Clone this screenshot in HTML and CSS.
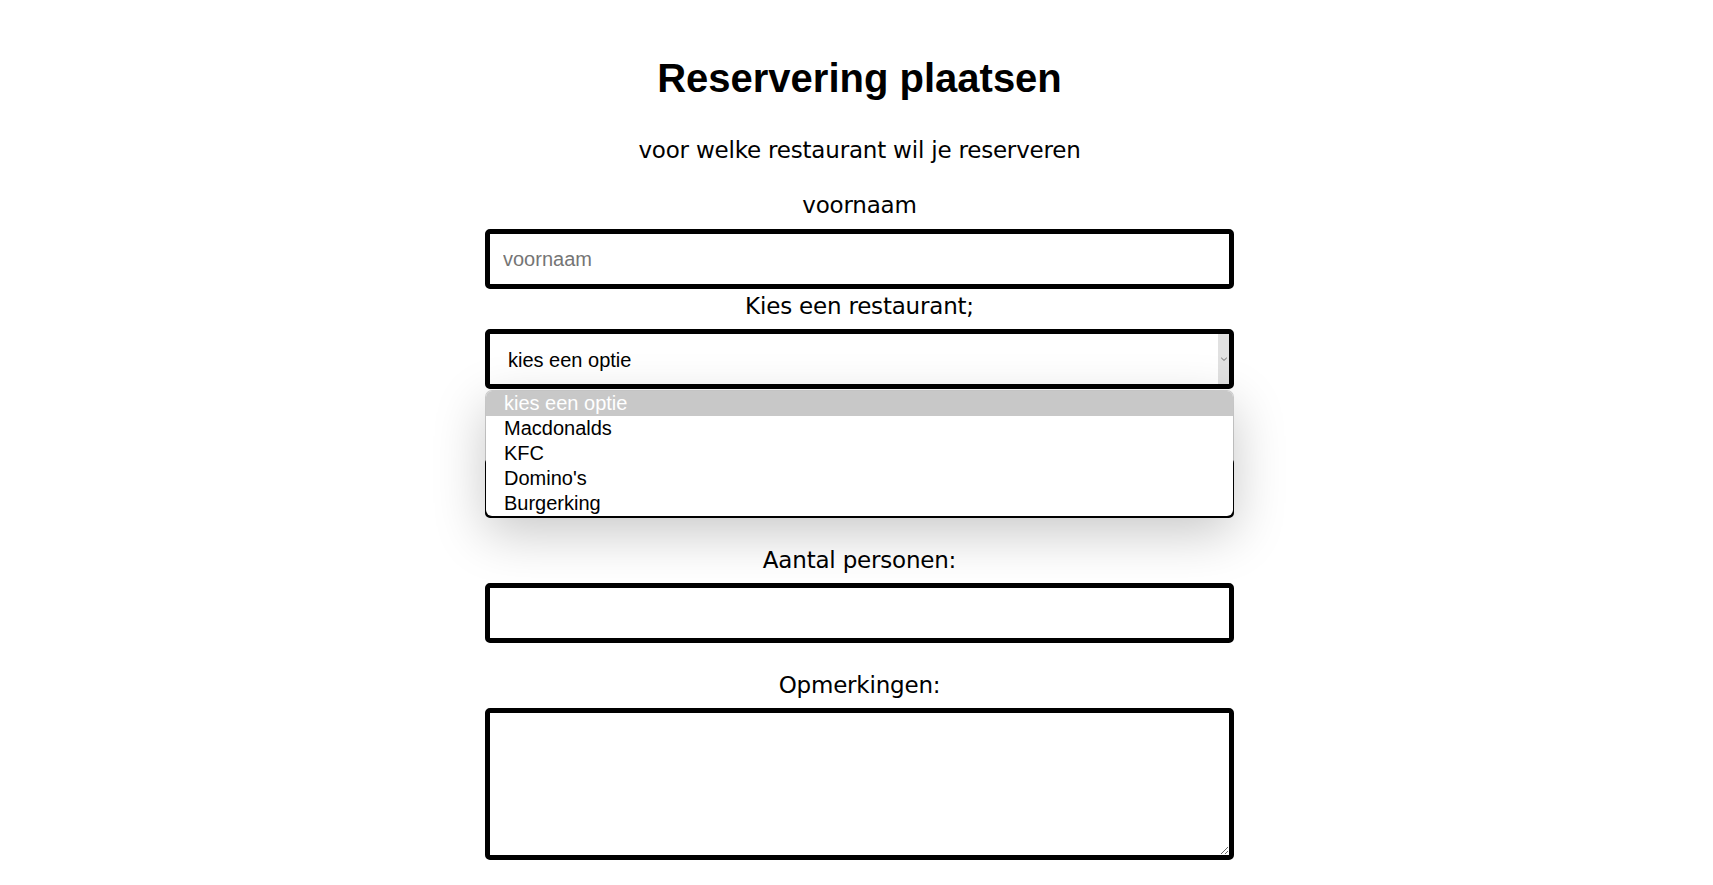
FILE: index.html
```html
<!DOCTYPE html>
<html lang="nl">
<head>
<meta charset="utf-8">
<title>Reservering plaatsen</title>
<link rel="stylesheet" href="styles.css">
</head>
<body>
<main class="page">
  <h1 class="title">Reservering plaatsen</h1>
  <p class="intro">voor welke restaurant wil je reserveren</p>
  <form class="form">
    <label class="label label-first" for="voornaam">voornaam</label>
    <input class="field field-first" id="voornaam" type="text" placeholder="voornaam">

    <label class="label label-tight" for="restaurant">Kies een restaurant;</label>
    <div class="select-wrap">
      <select class="field select" id="restaurant">
        <option>kies een optie</option>
        <option>Macdonalds</option>
        <option>KFC</option>
        <option>Domino's</option>
        <option>Burgerking</option>
      </select>
      <span class="select-btn" aria-hidden="true">
        <svg width="8" height="6" viewBox="0 0 8 6"><path d="M1.2 1.8 L4 4.4 L6.8 1.8" fill="none" stroke="#6b6b6b" stroke-width="1"/></svg>
      </span>
      <ul class="listbox" role="listbox">
        <li class="opt opt-active">kies een optie</li>
        <li class="opt">Macdonalds</li>
        <li class="opt">KFC</li>
        <li class="opt">Domino's</li>
        <li class="opt">Burgerking</li>
      </ul>
    </div>

    <label class="label label-under" for="datum">Datum:</label>
    <input class="field field-under" id="datum" type="text">

    <label class="label" for="personen">Aantal personen:</label>
    <input class="field" id="personen" type="text">

    <label class="label" for="opmerkingen">Opmerkingen:</label>
    <textarea class="field area" id="opmerkingen"></textarea>
  </form>
</main>
</body>
</html>
```

FILE: styles.css
```css
* {
  box-sizing: border-box;
}

html, body {
  margin: 0;
  background: #ffffff;
}

body {
  padding-left: 6px;
  color: #000000;
  font-family: "DejaVu Sans", Verdana, sans-serif;
}

.page {
  width: 749px;
  margin: 0 auto;
  padding-top: 55px;
  display: flex;
  flex-direction: column;
  align-items: center;
}

.title {
  margin: 0;
  font-family: "Liberation Sans", Arial, sans-serif;
  font-weight: 700;
  font-size: 40px;
  line-height: 46px;
  text-align: center;
}

.intro {
  margin: 36px 0 0;
  font-size: 23px;
  line-height: 27px;
  letter-spacing: -0.2px;
  text-align: center;
}

.form {
  width: 100%;
  display: flex;
  flex-direction: column;
  align-items: center;
}

.label {
  display: block;
  margin-top: 29px;
  font-size: 23px;
  line-height: 27px;
  letter-spacing: -0.2px;
  text-align: center;
}

.label-first {
  margin-top: 28px;
}

.label-tight {
  margin-top: 4px;
}

.label-under {
  margin-top: 30px;
}

.field {
  display: block;
  width: 100%;
  height: 60px;
  margin: 9px 0 0;
  padding: 0 13px;
  border: 5px solid #000000;
  border-radius: 5px;
  background: #ffffff;
  font-family: "Liberation Sans", Arial, sans-serif;
  font-size: 20px;
  color: #000000;
  outline: none;
}

.field-first {
  margin-top: 10px;
}

.field-under {
  margin-top: 12px;
}

.field::placeholder {
  color: #757575;
}

.select-wrap {
  position: relative;
  width: 100%;
  margin-top: 9px;
}

.select {
  margin: 0;
  padding: 1px 18px 0;
  -webkit-appearance: none;
  appearance: none;
}

.select-btn {
  position: absolute;
  top: 5px;
  bottom: 5px;
  right: 5px;
  width: 11px;
  background: #e1e1e1;
  display: flex;
  align-items: center;
  justify-content: center;
}

.listbox {
  position: absolute;
  top: calc(100% + 1px);
  left: 0;
  right: 0;
  z-index: 5;
  margin: 0;
  padding: 0 0 1px;
  list-style: none;
  background: #ffffff;
  background-clip: padding-box;
  border: 1px solid rgba(0, 0, 0, 0.18);
  border-radius: 7px;
  overflow: hidden;
  box-shadow: 0 16px 52px rgba(0, 0, 0, 0.22);
  font-family: "Liberation Sans", Arial, sans-serif;
  font-size: 20px;
}

.opt {
  height: 24.9px;
  line-height: 24.9px;
  padding-left: 18px;
  color: #000000;
  white-space: nowrap;
}

.opt-active {
  background: #c8c8c8;
  color: #ffffff;
}

.area {
  height: 152px;
  padding: 8px 13px;
  resize: vertical;
}
```
